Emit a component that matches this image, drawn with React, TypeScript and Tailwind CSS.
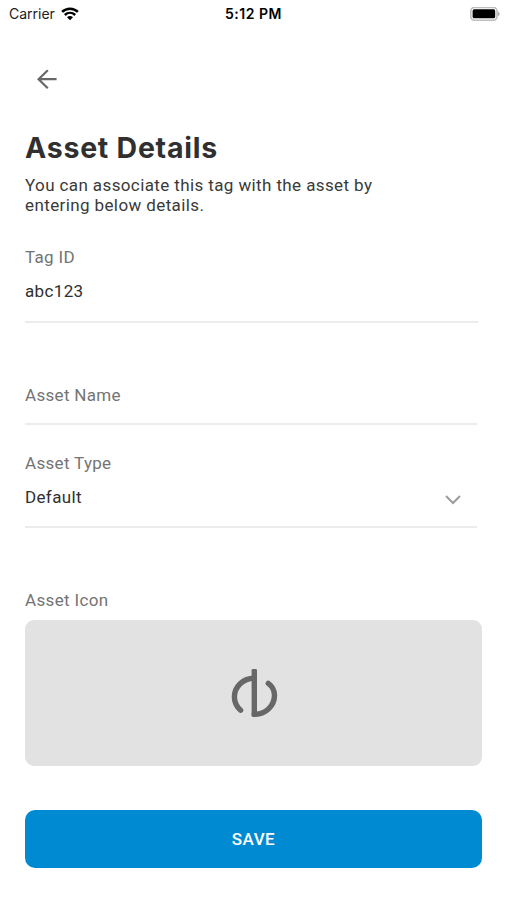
import { useState } from 'react';

interface FieldProps {
    label: string;
    value?: string;
    className?: string;
    children?: React.ReactNode;
}

const WifiIcon = () => (
    <svg width="18" height="14" viewBox="0 0 18 14" fill="none">
        <path d="M1.1 4.9C5.6 0.6 12.4 0.6 16.9 4.9" stroke="black" strokeWidth="2.6" />
        <path d="M3.8 8C6.9 5.1 11.1 5.1 14.2 8" stroke="black" strokeWidth="2.4" />
        <path d="M6 10.3C7.7 8.7 10.3 8.7 12 10.3L9 13.2Z" fill="black" />
    </svg>
);

const BatteryIcon = () => (
    <svg width="30" height="14" viewBox="0 0 30 14" fill="none">
        <rect x="0.8" y="0.4" width="26.2" height="12.8" rx="3.6" stroke="#bdbdbd" strokeWidth="1.6" />
        <rect x="2.6" y="2.3" width="22.6" height="9" rx="1.6" fill="black" />
        <path d="M28.2 5C29.6 5.5 29.6 8.3 28.2 8.8Z" fill="#b0b0b0" stroke="#b0b0b0" strokeWidth="0.8" />
    </svg>
);

const ArrowLeftIcon = () => (
    <svg width="21" height="20" viewBox="0 0 21 20" fill="none" stroke="#686868" strokeWidth="2.2">
        <path d="M20.6 10.2H2.5M11.8 1.2L2.6 10.2L11.8 19.2" />
    </svg>
);

const ChevronIcon = () => (
    <svg width="16" height="10" viewBox="0 0 16 10" fill="none" stroke="#9c9c9c" strokeWidth="2">
        <path d="M1 1L8 8L15 1" />
    </svg>
);

const AssetLogo = () => (
    <svg width="48" height="50" viewBox="0 0 48 50" fill="none" stroke="#676767" strokeWidth="5.4" strokeLinecap="round">
        <path d="M24 10.2C13.2 10.2 4.4 18.6 4.4 29C4.4 34.3 6.8 38.9 10.6 42.2" />
        <path d="M38.3 15.4C42 18.2 44.5 22.3 44.5 27.2C44.5 37.6 35.8 46.2 25.4 46.2H24.3" />
        <rect x="21.6" y="0.9" width="5.4" height="48" rx="1.4" fill="#676767" stroke="none" />
    </svg>
);

const Field: React.FC<FieldProps> = ({ label, value, className, children }) => (
    <div className={`border-b-2 border-[#ececec] ${className}`}>
        <p className="text-[17px] leading-5 tracking-[0.32px] text-[#747474]">{label}</p>
        {value && (
            <div className="mt-3.5 flex h-5 items-center justify-between">
                <p className="text-[17px] leading-5 tracking-[0.35px] text-[#303030]">{value}</p>
                {children}
            </div>
        )}
    </div>
);

const App: React.FC = () => {
    const [assetType] = useState('Default');

    return (
        <div className="h-[900px] w-full overflow-hidden bg-white font-['Roboto',sans-serif]">
            <div className="grid h-[27px] grid-cols-3 items-center pl-[9px] pr-[7px] font-['Inter',sans-serif] text-[14px] text-[#222]">
                <div className="flex items-center gap-[6px]">
                    <span>Carrier</span>
                    <WifiIcon />
                </div>
                <span className="pr-0.5 text-center font-semibold tracking-[0.5px] text-black">5:12 PM</span>
                <div className="flex justify-end">
                    <BatteryIcon />
                </div>
            </div>

            <div className="flex h-[103px] items-center pl-[36px]">
                <button aria-label="Back">
                    <ArrowLeftIcon />
                </button>
            </div>

            <main className="pl-[25px] pr-[25px]">
                <h1 className="font-['Inter',sans-serif] text-[28.5px] font-bold leading-9 tracking-[0.75px] text-[#303030]">
                    Asset Details
                </h1>
                <p className="mt-[9px] w-[370px] text-[17px] leading-5 tracking-[0.39px] text-[#3a3a3a]">
                    You can associate this tag with the asset by
                    <br />
                    entering below details.
                </p>

                <Field label="Tag ID" value="abc123" className="mr-1 mt-8 h-[76px]" />
                <Field label="Asset Name" className="mr-[5px] mt-[62px] h-10" />
                <Field label="Asset Type" value={assetType} className="mr-[5px] mt-7 h-[75px]">
                    <span className="mr-4 mt-1.5">
                        <ChevronIcon />
                    </span>
                </Field>

                <p className="mt-[62px] text-[17px] leading-5 tracking-[0.35px] text-[#747474]">Asset Icon</p>
                <div className="mt-2.5 flex h-[146px] items-center justify-center rounded-[9px] bg-[#e2e2e2]">
                    <AssetLogo />
                </div>

                <button className="mt-11 h-[58px] w-full rounded-[10px] bg-[#008ad2] pt-0.5 text-[17px] font-medium tracking-[0.5px] text-white">
                    SAVE
                </button>
            </main>
        </div>
    );
};

export default App;
